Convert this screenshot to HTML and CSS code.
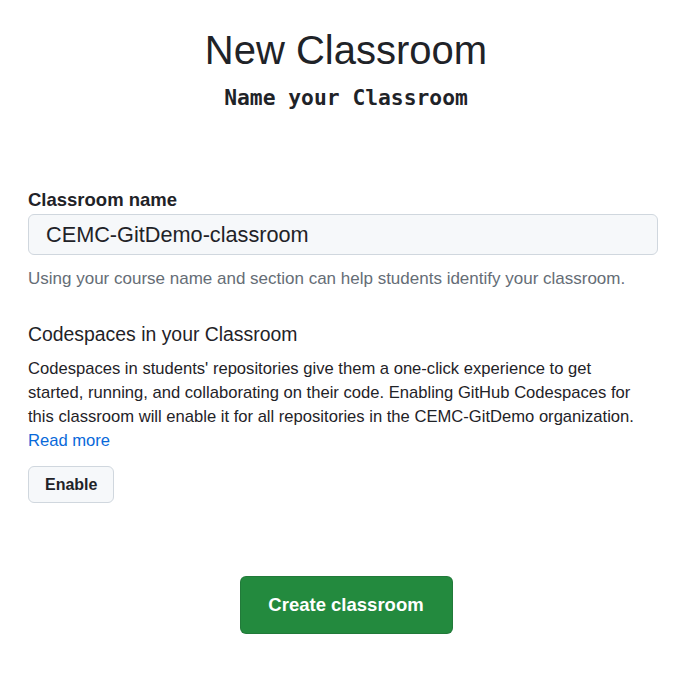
FILE: index.html
```html
<!DOCTYPE html>
<html lang="en">
<head>
<meta charset="utf-8">
<title>New Classroom</title>
<link rel="stylesheet" href="styles.css">
</head>
<body>
<main class="page">
  <header class="head">
    <h1 class="title">New Classroom</h1>
    <h2 class="subtitle">Name your Classroom</h2>
  </header>
  <form class="form">
    <div class="field">
      <label class="label" for="name">Classroom name</label>
      <input class="input" id="name" type="text" value="CEMC-GitDemo-classroom">
      <p class="note">Using your course name and section can help students identify your classroom.</p>
    </div>
    <section class="codespaces">
      <h3 class="section-title">Codespaces in your Classroom</h3>
      <p class="desc">Codespaces in students' repositories give them a one-click experience to get started, running, and collaborating on their code. Enabling GitHub Codespaces for this classroom will enable it for all repositories in the CEMC-GitDemo organization. <a class="link" href="#">Read more</a></p>
      <button class="btn" type="button">Enable</button>
    </section>
    <div class="actions">
      <button class="btn-primary" type="button">Create classroom</button>
    </div>
  </form>
</main>
</body>
</html>
```
FILE: styles.css
```css
* { box-sizing: border-box; }
html, body { margin: 0; padding: 0; background: #ffffff; }
body {
  font-family: "Liberation Sans", Arial, sans-serif;
  color: #1f2328;
}
.page {
  width: 630px;
  margin: 0 0 0 28px;
  padding-top: 26px;
}
.head {
  display: flex;
  flex-direction: column;
  align-items: center;
  margin-left: 6px;
}
.title {
  margin: 0;
  font-size: 40px;
  font-weight: 400;
  line-height: 48px;
}
.subtitle {
  margin: 0;
  font-family: "DejaVu Sans Mono", monospace;
  font-weight: 700;
  font-size: 21.3px;
  line-height: 28px;
  margin-top: 10px;
}
.form {
  margin-top: 76px;
  display: flex;
  flex-direction: column;
}
.field {
  display: flex;
  flex-direction: column;
}
.label {
  font-weight: 700;
  font-size: 18.5px;
  line-height: 24px;
  margin-bottom: 2px;
}
.input {
  width: 100%;
  height: 41px;
  padding: 0 17px;
  font-family: "Liberation Sans", Arial, sans-serif;
  font-size: 21.7px;
  color: #1f2328;
  background: #f6f8fa;
  border: 1px solid #d0d7de;
  border-radius: 6px;
  outline: none;
}
.note {
  margin: 12px 0 0;
  font-size: 17px;
  line-height: 24px;
  color: #656d76;
}
.codespaces {
  margin-top: 30px;
  display: flex;
  flex-direction: column;
  align-items: flex-start;
}
.section-title {
  margin: 0;
  font-size: 19.4px;
  font-weight: 400;
  line-height: 26px;
}
.desc {
  margin: 10px 0 0;
  max-width: 616px;
  font-size: 16.6px;
  line-height: 24px;
}
.link {
  display: block;
  color: #0969da;
  text-decoration: none;
}
.btn {
  margin-top: 13px;
  height: 37px;
  padding: 0 16px;
  font-family: "Liberation Sans", Arial, sans-serif;
  font-size: 16px;
  font-weight: 700;
  color: #1f2328;
  background: #f6f8fa;
  border: 1px solid #d0d7de;
  border-radius: 6px;
}
.actions {
  margin-top: 73px;
  display: flex;
  justify-content: center;
  margin-left: 6px;
}
.btn-primary {
  width: 213px;
  height: 58px;
  font-family: "Liberation Sans", Arial, sans-serif;
  font-size: 18.5px;
  font-weight: 700;
  color: #ffffff;
  background: #238a3e;
  border: 1px solid rgba(31, 35, 40, 0.15);
  border-radius: 6px;
}
```
